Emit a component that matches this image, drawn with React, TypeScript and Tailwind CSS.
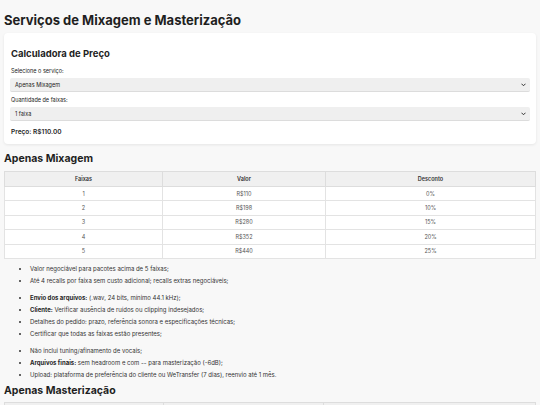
import React from "react";

const MIX_ROWS = [
  { faixas: "1", valor: "R$110", desconto: "0%" },
  { faixas: "2", valor: "R$198", desconto: "10%" },
  { faixas: "3", valor: "R$280", desconto: "15%" },
  { faixas: "4", valor: "R$352", desconto: "20%" },
  { faixas: "5", valor: "R$440", desconto: "25%" },
];

function Chevron() {
  return (
    <svg
      className="pointer-events-none absolute right-[4px] top-1/2 -translate-y-1/2"
      width="5"
      height="4"
      viewBox="0 0 10 8"
      fill="none"
      stroke="#333"
      strokeWidth="2"
      strokeLinecap="round"
      strokeLinejoin="round"
    >
      <polyline points="1.5 2 5 5.5 8.5 2" />
    </svg>
  );
}

function FakeSelect({ value }: { value: string }) {
  return (
    <div className="relative h-[14px] rounded-[2px] border-b border-[#dcdcdc] bg-[#efefef] pl-[5px] text-[5.5px] leading-[14px] text-[#222]">
      {value}
      <Chevron />
    </div>
  );
}

function PriceTable({ rows }: { rows: typeof MIX_ROWS }) {
  return (
    <table className="w-full border-collapse text-center text-[5.5px] text-[#555]">
      <thead>
        <tr className="bg-[#f0f0f0]">
          <th className="h-[15px] w-[158px] border border-[#dddddd] font-semibold text-[#333]">Faixas</th>
          <th className="h-[15px] w-[163px] border border-[#dddddd] font-semibold text-[#333]">Valor</th>
          <th className="h-[15px] border border-[#dddddd] font-semibold text-[#333]">Desconto</th>
        </tr>
      </thead>
      <tbody className="bg-white">
        {rows.map((r) => (
          <tr key={r.faixas}>
            <td className="h-[14.4px] border border-[#e3e3e3]">{r.faixas}</td>
            <td className="h-[14.4px] border border-[#e3e3e3]">{r.valor}</td>
            <td className="h-[14.4px] border border-[#e3e3e3]">{r.desconto}</td>
          </tr>
        ))}
      </tbody>
    </table>
  );
}

export default function App() {
  return (
    <div className="h-[405px] overflow-hidden bg-[#f8f8f8] px-[4px] pt-[11px] font-['Inter',sans-serif] text-[#222]">
      <h1 className="text-[13px] font-bold leading-[18px] text-[#1f1f1f]">
        Serviços de Mixagem e Masterização
      </h1>

      {/* calculadora */}
      <section className="mt-[4px] rounded-[4px] bg-white px-[6px] pb-[8px] pt-[15px] shadow-[0_1px_3px_rgba(0,0,0,0.08)]">
        <h2 className="pl-[1px] text-[9.5px] font-bold leading-[12px] text-[#1f1f1f]">Calculadora de Preço</h2>
        <p className="mt-[7px] pl-[1px] text-[5.5px] leading-[8px] text-[#222]">Selecione o serviço:</p>
        <div className="mt-[3px]">
          <FakeSelect value="Apenas Mixagem" />
        </div>
        <p className="mt-[4px] pl-[1px] text-[5.5px] leading-[8px] text-[#222]">Quantidade de faixas:</p>
        <div className="mt-[3px]">
          <FakeSelect value="1 faixa" />
        </div>
        <p className="mt-[7px] pl-[1px] text-[6.5px] font-semibold leading-[8px] text-[#1f1f1f]">
          Preço: R$110.00
        </p>
      </section>

      <h2 className="mt-[8px] text-[10.5px] font-bold leading-[14px] text-[#1f1f1f]">Apenas Mixagem</h2>
      <div className="mt-[5px]">
        <PriceTable rows={MIX_ROWS} />
      </div>

      <div className="pl-[18px] text-[6px] leading-[12px] text-[#333]">
        <ul className="mt-[4px] list-disc pl-[8px]">
          <li>Valor negociável para pacotes acima de 5 faixas;</li>
          <li>Até 4 recalls por faixa sem custo adicional; recalls extras negociáveis;</li>
        </ul>
        <ul className="mt-[5px] list-disc pl-[8px]">
          <li>
            <span className="font-bold text-[#1f1f1f]">Envio dos arquivos:</span> (.wav, 24 bits, mínimo 44.1 kHz);
          </li>
          <li>
            <span className="font-bold text-[#1f1f1f]">Cliente:</span> Verificar ausência de ruídos ou clipping indesejados;
          </li>
          <li>Detalhes do pedido: prazo, referência sonora e especificações técnicas;</li>
          <li>Certificar que todas as faixas estão presentes;</li>
        </ul>
        <ul className="mt-[5px] list-disc pl-[8px]">
          <li>Não inclui tuning/afinamento de vocais;</li>
          <li>
            <span className="font-bold text-[#1f1f1f]">Arquivos finais:</span> sem headroom e com -- para masterização (-6dB);
          </li>
          <li>Upload: plataforma de preferência do cliente ou WeTransfer (7 dias), reenvio até 1 mês.</li>
        </ul>
      </div>

      <h2 className="mt-[3px] text-[10.5px] font-bold leading-[14px] text-[#1f1f1f]">Apenas Masterização</h2>
      <div className="mt-[4px]">
        <table className="w-full border-collapse text-[5.5px]">
          <thead>
            <tr className="bg-[#f0f0f0]">
              <th className="h-[15px] w-[159px] border border-[#dddddd]"></th>
              <th className="h-[15px] w-[160px] border border-[#dddddd]"></th>
              <th className="h-[15px] border border-[#dddddd]"></th>
            </tr>
          </thead>
        </table>
      </div>
    </div>
  );
}
